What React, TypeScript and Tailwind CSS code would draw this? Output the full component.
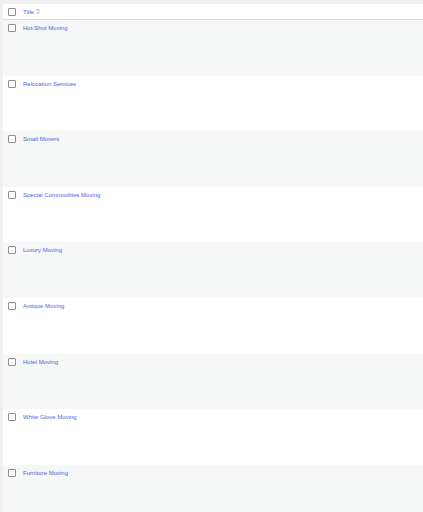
import React from "react";

const rows = [
  "Hot-Shot Moving",
  "Relocation Services",
  "Small Movers",
  "Special Commodities Moving",
  "Luxury Moving",
  "Antique Moving",
  "Hotel Moving",
  "White Glove Moving",
  "Furniture Moving",
];

function Box() {
  return <div className="w-[8px] h-[8px] border border-[#8c8f94] rounded-[1px] bg-white shrink-0" />;
}

export default function App() {
  return (
    <div className="w-[423px] h-[512px] overflow-hidden bg-[#f0f0f1] pt-[4px] pl-[3px]" style={{ fontFamily: '"Liberation Sans", Arial, sans-serif' }}>
      <div className="bg-white">
        <div className="h-[16px] flex items-center gap-[7px] pl-[5px] border-b border-[#dcdcde]">
          <Box />
          <span className="text-[6px] text-[#4a64e6] leading-none">Title</span>
          <svg width="4" height="7" viewBox="0 0 4 7" className="-ml-[5px]">
            <path d="M0.5 3 L2 1.2 L3.5 3" fill="none" stroke="#8c8f94" strokeWidth="0.8" />
            <path d="M0.5 4 L2 5.8 L3.5 4" fill="none" stroke="#8c8f94" strokeWidth="0.8" />
          </svg>
        </div>
        {rows.map((r, i) => (
          <div key={r} className={`h-[55.6px] flex items-start gap-[7px] pl-[5px] pt-[4px] ${i % 2 === 0 ? "bg-[#f6f7f7]" : "bg-white"}`}>
            <Box />
            <span className="text-[6px] font-medium text-[#4a64e6] leading-[8px]">{r}</span>
          </div>
        ))}
      </div>
    </div>
  );
}
